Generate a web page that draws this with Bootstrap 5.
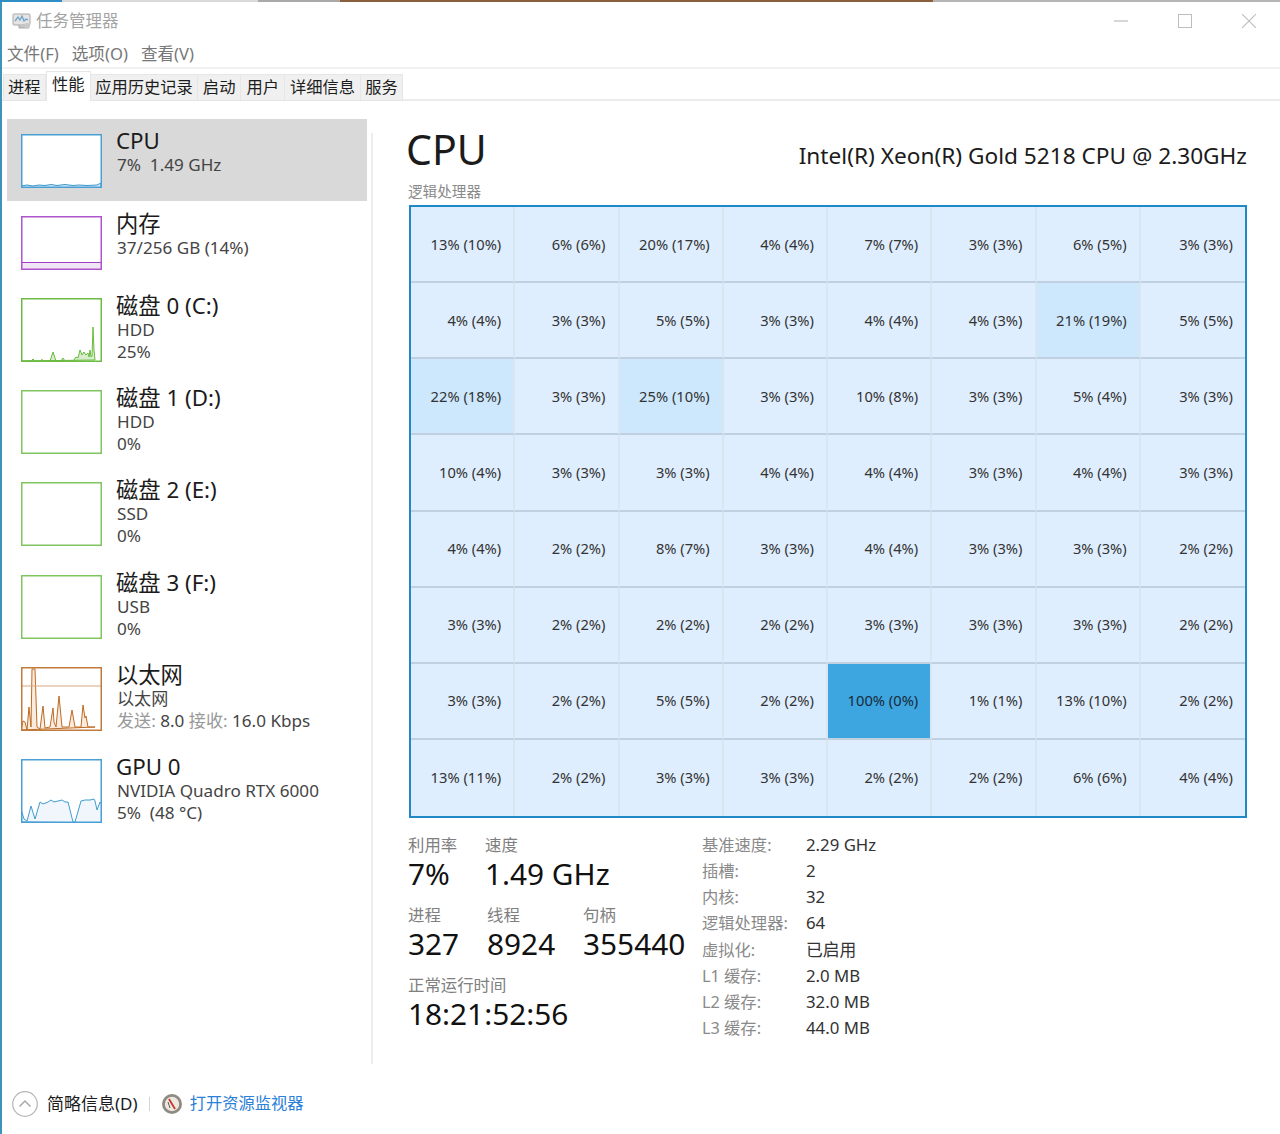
<!DOCTYPE html>
<html lang="zh-CN">
<head>
<meta charset="utf-8">
<title>任务管理器</title>
<link href="https://cdn.jsdelivr.net/npm/bootstrap@5.3.0/dist/css/bootstrap.min.css" rel="stylesheet">
<style>
html,body{margin:0;height:1134px;overflow:hidden;background:#fff}
body{font-family:"Noto Sans","Noto Sans CJK SC",sans-serif;color:#1b1b1b}
.shell{width:1280px;height:1134px;border-left:2px solid #3c94b8}
.strip{height:2px;margin-left:-2px;flex:none}
.strip i{display:block;height:2px}
.s1{width:62px;background:#2f8fc4}.s2{width:196px;background:#d9d9d9}.s3{width:82px;background:#a9a9a9}.s4{width:593px;background:#8a5f3e}.s5{flex:1;background:#b5b5b5}
.titlebar{height:35px;flex:none;padding:2px 0 0 10px;color:#a3a3a3;font-size:16.5px}
.titlebar svg{flex:none}
.ttext{padding-top:1px}
.wbtns{gap:2px}
.wbtn{width:62px;height:35px}
.menubar{height:32px;flex:none;border-bottom:2px solid #f1f1f1;padding:5px 0 0 5px;gap:13px;font-size:16.6px;color:#777}
.tabbar{height:32px;flex:none;padding:3px 0 0 1px;border-bottom:2px solid #ececec!important;--bs-nav-tabs-border-width:0;flex-wrap:nowrap}
.tabbar .nav-link{height:27px;padding:0 5px;margin:2px 0 0;border:1px solid #e6e6e6;border-left-width:0;border-radius:0;background:#f0f0f0;color:#1d1d1d;font-size:16.3px;line-height:24px;white-space:nowrap}
.tabbar .nav-link.tight{padding:0 4px}
.tabbar .nav-item:first-child .nav-link{border-left-width:1px}
.tabbar .nav-link.active{height:30px;margin-top:-1px;background:#fff;border:1px solid #e6e6e6;border-bottom:0;border-top-width:1px;color:#1d1d1d;line-height:24px;padding:0 5.500px}
.mainarea{min-height:0}
.sidebar{width:365px;flex:none;padding:18px 0 0 5px}
.perf{display:flex;gap:14px;padding:15px 0 0 14px;height:92.2px;color:#1b1b1b}
.perf.first{height:82px;background:#d9d9d9}
.perf.mem{height:82px}
.perf.first .pname{margin-top:-5px}
.thumb{display:block;width:81px;height:64px;flex:none;background:#fff}
.thumb.small{height:54px}
.pname{font-size:22.3px;line-height:24px;margin-top:-4px;white-space:nowrap}
.psub{font-size:17.1px;line-height:22px;color:#444;padding-left:1px;margin-top:1px;white-space:nowrap}
.pmute{color:#999}
.detail{margin:32px 0 15px 4px;border-left:2px solid #ececec;width:875px;padding-left:34px;flex:none}
.headrow{height:52px;width:840px}
.bigt{font-size:41px;line-height:36px;margin:-2px 0 0 -1px}
.model{font-size:22.65px;line-height:26px;margin-top:10px;white-space:nowrap}
.glabel{font-size:14.6px;line-height:18px;color:#8a8a8a;margin:-3px 0 5px 1px}
.cgrid{display:grid;grid-template-columns:repeat(8,1fr);grid-template-rows:repeat(8,1fr);width:838px;height:613px;margin-left:2px;border:2px solid #1f88c6;background:#dfeefe}
.cell{display:flex;align-items:center;justify-content:flex-end;padding:0 12px 1px 0;font-size:14.7px;color:#333;border-right:2px solid #d9e5f0;border-bottom:2px solid #bfd1e0;white-space:nowrap}
.cell:nth-child(8n){border-right:0}
.cell:nth-child(n+57){border-bottom:0}
.cell.hi{background:#cde8fd}
.cell.full{background:#3da5e0;color:#1a2a38}
.stats{margin-top:17px;margin-left:1px}
.sleft{width:294px;flex:none}
.slab{font-size:16.4px;line-height:20px;color:#808080}
.sval{font-size:29.8px;line-height:38px;color:#111;white-space:nowrap;margin-bottom:12px}
.cw1{width:77px}.cw2{width:79px}.cw3{width:96px}
.ctab{display:grid;grid-template-columns:104px auto;grid-auto-rows:26.15px;line-height:26px;margin:-3px 0 0 0;white-space:nowrap}
.ctab dt{font-weight:400;font-size:16.3px;color:#8a8a8a;margin:0}
.ctab dd{margin:0;font-size:16.8px;color:#333}
.footerbar{height:55px;flex:none;padding:0 0 6px 10px;font-size:17px;margin-top:auto}
.chev{margin-right:9px;flex:none}
.fsep{width:1px;height:14px;background:#d5d5d5;margin:0 11px}
.flink{color:#2b80d8;text-decoration:none;margin-left:7px;font-size:16.3px}
</style>
</head>
<body>
<div class="shell d-flex flex-column">
  <div class="strip d-flex"><i class="s1"></i><i class="s2"></i><i class="s3"></i><i class="s4"></i><i class="s5"></i></div>
  <div class="titlebar d-flex align-items-center justify-content-between">
    <div class="d-flex align-items-center gap-1">
      <svg width="20" height="20" viewBox="0 0 20 20"><rect x="1" y="3" width="17" height="11" rx="1" fill="#e4e4e4" stroke="#a8a8a8"/><path d="M3 10l3-4 2 3 2-4 2 5 2-2 2 1" fill="none" stroke="#6fa3c7" stroke-width="1.3"/><path d="M7 14v3h6v-3" fill="#c4c4c4" stroke="#a8a8a8"/><circle cx="15" cy="15" r="3" fill="#c9c9c9"/></svg>
      <span class="ttext">任务管理器</span>
    </div>
    <div class="d-flex wbtns">
      <div class="wbtn d-flex align-items-center justify-content-center"><svg width="14" height="14" viewBox="0 0 14 14"><path d="M0 7h14" stroke="#bdbdbd" stroke-width="1.2"/></svg></div>
      <div class="wbtn d-flex align-items-center justify-content-center"><svg width="14" height="14" viewBox="0 0 14 14"><rect x=".5" y=".5" width="13" height="13" fill="none" stroke="#bdbdbd"/></svg></div>
      <div class="wbtn d-flex align-items-center justify-content-center"><svg width="14" height="14" viewBox="0 0 14 14"><path d="M0 0l14 14M14 0L0 14" stroke="#bdbdbd" stroke-width="1.1"/></svg></div>
    </div>
  </div>
  <div class="menubar d-flex align-items-center"><span>文件(F)</span><span>选项(O)</span><span>查看(V)</span></div>
  <ul class="nav nav-tabs tabbar">
    <li class="nav-item"><a class="nav-link tight" href="#">进程</a></li>
    <li class="nav-item"><a class="nav-link active" href="#">性能</a></li>
    <li class="nav-item"><a class="nav-link tight" href="#">应用历史记录</a></li>
    <li class="nav-item"><a class="nav-link" href="#">启动</a></li>
    <li class="nav-item"><a class="nav-link" href="#">用户</a></li>
    <li class="nav-item"><a class="nav-link" href="#">详细信息</a></li>
    <li class="nav-item"><a class="nav-link tight" href="#">服务</a></li>
  </ul>
  <div class="mainarea d-flex flex-grow-1">
    <aside class="sidebar">
      <div class="perf first">
        <svg class="thumb small" viewBox="0 0 81 54"><path d="M0 52l6-1 6 1 6-1 6 .5 6-1 6 1 8-1 8 1 6-.5 8 .5 10-.5 4-2V54H0z" fill="#d6eaf7" stroke="#3b97cf"/><rect x=".75" y=".75" width="79.5" height="52.5" fill="none" stroke="#4a9fd4" stroke-width="1.5"/></svg>
        <div><div class="pname">CPU</div><div class="psub">7%&nbsp; 1.49 GHz</div></div>
      </div>
      <div class="perf mem">
        <svg class="thumb small" viewBox="0 0 81 54"><rect y="46" width="81" height="8" fill="#f1e6f6"/><path d="M0 46.5h81" stroke="#a33fc4"/><rect x=".75" y=".75" width="79.5" height="52.5" fill="none" stroke="#ad55ca" stroke-width="1.5"/></svg>
        <div><div class="pname">内存</div><div class="psub">37/256 GB (14%)</div></div>
      </div>
      <div class="perf">
        <svg class="thumb" viewBox="0 0 81 64"><path d="M0 63h10l2-2 2 2h5l2-1.500 2 1.500h6l3-9 3 9h5l2-3 2 3h8l3-4 2 1 2-8 2 5 2-3 2 3 2-2 1 4 1-7 1 7 1-1 1-29 1 23 1 10z" fill="#d8edcb" stroke="#69bb3f"/><rect x=".75" y=".75" width="79.5" height="62.500" fill="none" stroke="#6dbb45" stroke-width="1.5"/></svg>
        <div><div class="pname">磁盘 0 (C:)</div><div class="psub">HDD<br>25%</div></div>
      </div>
      <div class="perf">
        <svg class="thumb" viewBox="0 0 81 64"><rect x=".75" y=".75" width="79.5" height="62.500" fill="none" stroke="#80c560" stroke-width="1.5"/></svg>
        <div><div class="pname">磁盘 1 (D:)</div><div class="psub">HDD<br>0%</div></div>
      </div>
      <div class="perf">
        <svg class="thumb" viewBox="0 0 81 64"><rect x=".75" y=".75" width="79.500" height="62.500" fill="none" stroke="#80c560" stroke-width="1.5"/></svg>
        <div><div class="pname">磁盘 2 (E:)</div><div class="psub">SSD<br>0%</div></div>
      </div>
      <div class="perf">
        <svg class="thumb" viewBox="0 0 81 64"><rect x=".75" y=".75" width="79.500" height="62.500" fill="none" stroke="#80c560" stroke-width="1.5"/></svg>
        <div><div class="pname">磁盘 3 (F:)</div><div class="psub">USB<br>0%</div></div>
      </div>
      <div class="perf">
        <svg class="thumb" viewBox="0 0 81 64"><path d="M0 63l2-9 2 1 2 8 2-23 2 20 1-58h3l2 58 3 2 3-23 2 22 5-1 3-19 1 14 2 5 3-31 3 31 7 0 3-17 3 17h6l2-22 2 13 1-2 2 11h7z" fill="#f9ecdf" stroke="#bf6a22"/><path d="M0 19h81" stroke="#d9a77e"/><rect x=".75" y=".75" width="79.500" height="62.500" fill="none" stroke="#bf7a3c" stroke-width="1.5"/></svg>
        <div><div class="pname">以太网</div><div class="psub">以太网<br><span class="pmute">发送:</span> 8.0 <span class="pmute">接收:</span> 16.0 Kbps</div></div>
      </div>
      <div class="perf">
        <svg class="thumb" viewBox="0 0 81 64"><path d="M0 63V50l3 10 3 2 4-15 4 13 5-17 3 2 5-2 3-2 3 2 4-1 4-1 3 2 3 0 5 20h2l6-21 4-1 5 0 4-1 1 2 2 9 3-8 2 3 2 17 2 1z" fill="#f0f6fb" stroke="#3f9ccf"/><rect x=".75" y=".75" width="79.500" height="62.500" fill="none" stroke="#4a9fd4" stroke-width="1.5"/></svg>
        <div><div class="pname">GPU 0</div><div class="psub">NVIDIA Quadro RTX 6000<br>5%&nbsp; (48 °C)</div></div>
      </div>
    </aside>
    <section class="detail">
      <div class="headrow d-flex justify-content-between align-items-start">
        <div class="bigt">CPU</div>
        <div class="model">Intel(R) Xeon(R) Gold 5218 CPU @ 2.30GHz</div>
      </div>
      <div class="glabel">逻辑处理器</div>
      <div class="cgrid">
        <div class="cell">13% (10%)</div><div class="cell">6% (6%)</div><div class="cell">20% (17%)</div><div class="cell">4% (4%)</div><div class="cell">7% (7%)</div><div class="cell">3% (3%)</div><div class="cell">6% (5%)</div><div class="cell">3% (3%)</div>
        <div class="cell">4% (4%)</div><div class="cell">3% (3%)</div><div class="cell">5% (5%)</div><div class="cell">3% (3%)</div><div class="cell">4% (4%)</div><div class="cell">4% (3%)</div><div class="cell hi">21% (19%)</div><div class="cell">5% (5%)</div>
        <div class="cell hi">22% (18%)</div><div class="cell">3% (3%)</div><div class="cell hi">25% (10%)</div><div class="cell">3% (3%)</div><div class="cell">10% (8%)</div><div class="cell">3% (3%)</div><div class="cell">5% (4%)</div><div class="cell">3% (3%)</div>
        <div class="cell">10% (4%)</div><div class="cell">3% (3%)</div><div class="cell">3% (3%)</div><div class="cell">4% (4%)</div><div class="cell">4% (4%)</div><div class="cell">3% (3%)</div><div class="cell">4% (4%)</div><div class="cell">3% (3%)</div>
        <div class="cell">4% (4%)</div><div class="cell">2% (2%)</div><div class="cell">8% (7%)</div><div class="cell">3% (3%)</div><div class="cell">4% (4%)</div><div class="cell">3% (3%)</div><div class="cell">3% (3%)</div><div class="cell">2% (2%)</div>
        <div class="cell">3% (3%)</div><div class="cell">2% (2%)</div><div class="cell">2% (2%)</div><div class="cell">2% (2%)</div><div class="cell">3% (3%)</div><div class="cell">3% (3%)</div><div class="cell">3% (3%)</div><div class="cell">2% (2%)</div>
        <div class="cell">3% (3%)</div><div class="cell">2% (2%)</div><div class="cell">5% (5%)</div><div class="cell">2% (2%)</div><div class="cell full">100% (0%)</div><div class="cell">1% (1%)</div><div class="cell">13% (10%)</div><div class="cell">2% (2%)</div>
        <div class="cell">13% (11%)</div><div class="cell">2% (2%)</div><div class="cell">3% (3%)</div><div class="cell">3% (3%)</div><div class="cell">2% (2%)</div><div class="cell">2% (2%)</div><div class="cell">6% (6%)</div><div class="cell">4% (4%)</div>
      </div>
      <div class="stats d-flex">
        <div class="sleft">
          <div class="d-flex">
            <div class="cw1"><div class="slab">利用率</div><div class="sval">7%</div></div>
            <div><div class="slab">速度</div><div class="sval">1.49 GHz</div></div>
          </div>
          <div class="d-flex">
            <div class="cw2"><div class="slab">进程</div><div class="sval">327</div></div>
            <div class="cw3"><div class="slab">线程</div><div class="sval">8924</div></div>
            <div><div class="slab">句柄</div><div class="sval">355440</div></div>
          </div>
          <div class="slab">正常运行时间</div><div class="sval">18:21:52:56</div>
        </div>
        <dl class="ctab">
          <dt>基准速度:</dt><dd>2.29 GHz</dd>
          <dt>插槽:</dt><dd>2</dd>
          <dt>内核:</dt><dd>32</dd>
          <dt>逻辑处理器:</dt><dd>64</dd>
          <dt>虚拟化:</dt><dd>已启用</dd>
          <dt>L1 缓存:</dt><dd>2.0 MB</dd>
          <dt>L2 缓存:</dt><dd>32.0 MB</dd>
          <dt>L3 缓存:</dt><dd>44.0 MB</dd>
        </dl>
      </div>
    </section>
  </div>
  <div class="footerbar d-flex align-items-center">
    <svg width="26" height="26" viewBox="0 0 26 26" class="chev"><circle cx="13" cy="13" r="12.300" fill="#fff" stroke="#b5b5b5" stroke-width="1.200"/><path d="M7.500 15.500L13 10l5.500 5.500" fill="none" stroke="#a9a9a9" stroke-width="1.500"/></svg>
    <span>简略信息(D)</span>
    <span class="fsep"></span>
    <svg width="22" height="22" viewBox="0 0 22 22"><circle cx="11" cy="11" r="10" fill="#8f8a82"/><circle cx="11" cy="11" r="7.200" fill="#eee9e0"/><path d="M8 6l6 10" stroke="#c8382c" stroke-width="1.800"/><path d="M7 9l2 6" stroke="#5a5a5a"/></svg>
    <a class="flink" href="#">打开资源监视器</a>
  </div>
</div>
</body>
</html>
